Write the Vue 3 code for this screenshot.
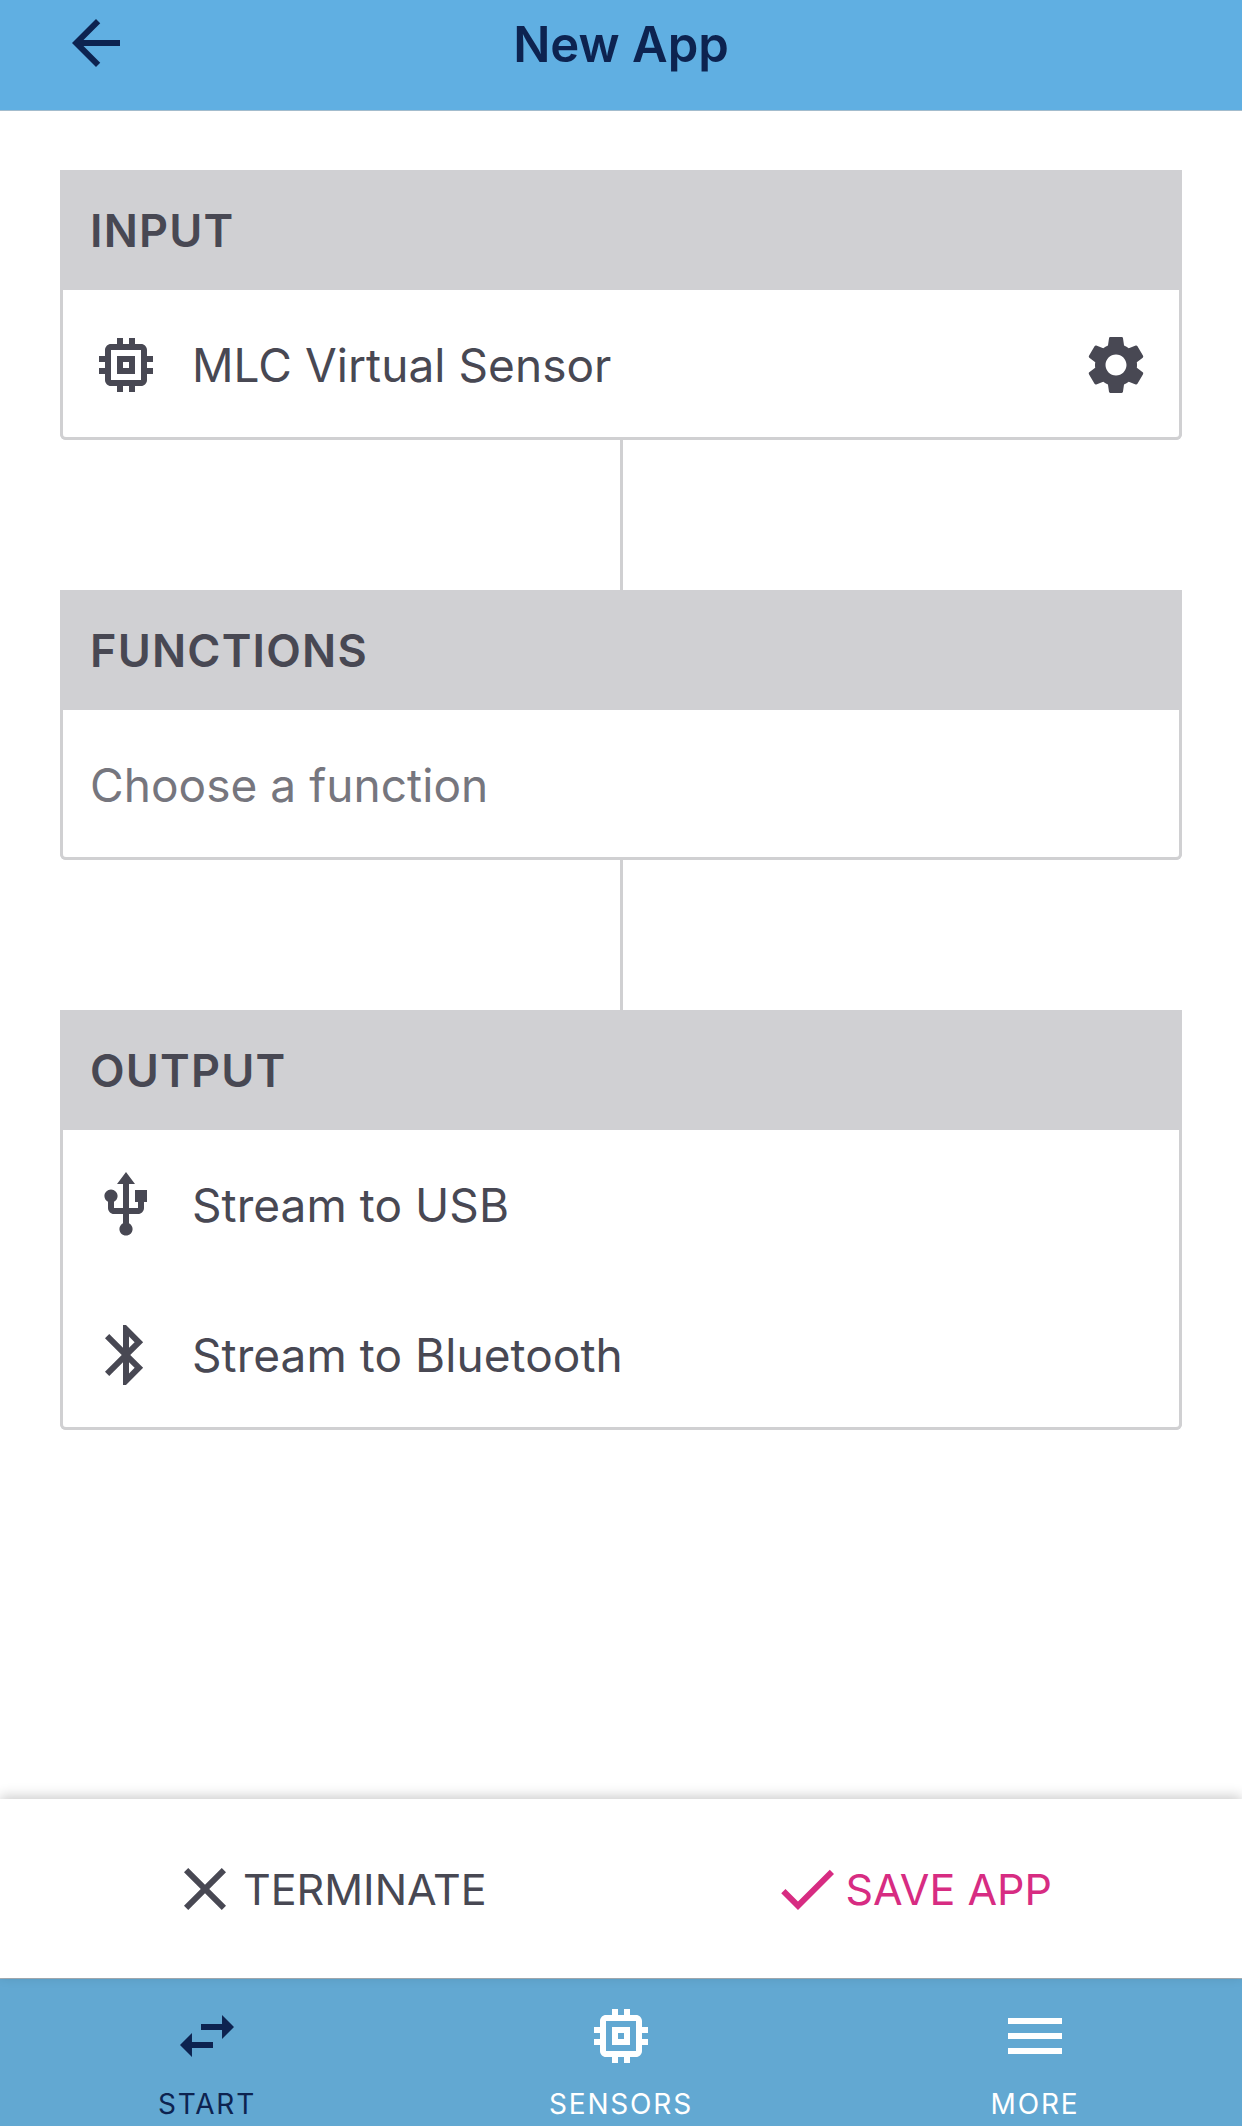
<script setup>
const icons = {
  back: 'M20 11H7.83l5.59-5.59L12 4l-8 8 8 8 1.41-1.41L7.83 13H20v-2z',
  chip: 'M15 9H9v6h6V9zm-2 4h-2v-2h2v2zm8-2V9h-2V7c0-1.1-.9-2-2-2h-2V3h-2v2h-2V3H9v2H7c-1.1 0-2 .9-2 2v2H3v2h2v2H3v2h2v2c0 1.1.9 2 2 2h2v2h2v-2h2v2h2v-2h2c1.1 0 2-.9 2-2v-2h2v-2h-2v-2h2zm-4 6H7V7h10v10z',
  gear: 'M19.14 12.94c.04-.3.06-.61.06-.94 0-.32-.02-.64-.07-.94l2.03-1.58c.18-.14.23-.41.12-.61l-1.92-3.32c-.12-.22-.37-.29-.59-.22l-2.39.96c-.5-.38-1.03-.7-1.62-.94l-.36-2.54c-.04-.24-.24-.41-.48-.41h-3.84c-.24 0-.43.17-.47.41l-.36 2.54c-.59.24-1.13.57-1.62.94l-2.39-.96c-.22-.08-.47 0-.59.22L2.74 8.87c-.12.21-.08.47.12.61l2.03 1.58c-.05.3-.09.63-.09.94s.02.64.07.94l-2.03 1.58c-.18.14-.23.41-.12.61l1.92 3.32c.12.22.37.29.59.22l2.39-.96c.5.38 1.03.7 1.62.94l.36 2.54c.05.24.24.41.48.41h3.84c.24 0 .44-.17.47-.41l.36-2.54c.59-.24 1.13-.56 1.62-.94l2.39.96c.22.08.47 0 .59-.22l1.92-3.32c.12-.22.07-.47-.12-.61l-2.01-1.58zM12 15.6c-1.98 0-3.6-1.62-3.6-3.6s1.62-3.6 3.6-3.6 3.6 1.62 3.6 3.6-1.62 3.6-3.6 3.6z',
  usb: 'M15 7v4h1v2h-3V5h2l-3-4-3 4h2v8H8v-2.07c.7-.37 1.2-1.08 1.2-1.93 0-1.21-.99-2.2-2.2-2.2-1.21 0-2.2.99-2.2 2.2 0 .85.5 1.56 1.2 1.93V13c0 1.11.89 2 2 2h3v3.05c-.71.37-1.2 1.1-1.2 1.95 0 1.22.99 2.2 2.2 2.2 1.21 0 2.2-.98 2.2-2.2 0-.85-.49-1.58-1.2-1.95V15h3c1.11 0 2-.89 2-2v-2h1V7h-4z',
  bluetooth: 'M17.71 7.71L12 2h-1v7.59L6.41 5 5 6.41 10.59 12 5 17.59 6.41 19 11 14.41V22h1l5.71-5.71-4.3-4.29 4.3-4.29zM13 5.83l1.88 1.88L13 9.59V5.83zm1.88 10.46L13 18.17v-3.76l1.88 1.88z',
  close: 'M19 6.41L17.59 5 12 10.59 6.41 5 5 6.41 10.59 12 5 17.59 6.41 19 12 13.41 17.59 19 19 17.59 13.41 12z',
  check: 'M9 16.17L4.83 12l-1.42 1.41L9 19 21 7l-1.41-1.41z',
  swap: 'M6.99 11L3 15l3.99 4v-3H14v-2H6.99v-3zM21 9l-3.99-4v3H10v2h7.01v3L21 9z',
  menu: 'M3 18h18v-2H3v2zm0-5h18v-2H3v2zm0-7v2h18V6H3z'
}

const cards = [
  { title: 'INPUT', rows: [{ icon: 'chip', text: 'MLC Virtual Sensor', settings: true }] },
  { title: 'FUNCTIONS', rows: [{ text: 'Choose a function', placeholder: true }] },
  { title: 'OUTPUT', rows: [{ icon: 'usb', text: 'Stream to USB' }, { icon: 'bluetooth', text: 'Stream to Bluetooth' }] }
]

const tabs = [
  { icon: 'swap', label: 'START', active: true },
  { icon: 'chip', label: 'SENSORS' },
  { icon: 'menu', label: 'MORE' }
]
</script>

<template>
  <div class="screen">
    <header class="topbar">
      <svg class="icon" viewBox="0 0 24 24"><path :d="icons.back" /></svg>
      <h1 class="title">New App</h1>
    </header>

    <main class="content">
      <template v-for="(card, i) in cards" :key="card.title">
        <div v-if="i > 0" class="connector"></div>
        <section class="card">
          <h2 class="card-head">{{ card.title }}</h2>
          <div class="card-body">
            <div v-for="row in card.rows" :key="row.text" class="row">
              <svg v-if="row.icon" class="icon" viewBox="0 0 24 24"><path :d="icons[row.icon]" /></svg>
              <span class="row-text" :class="{ placeholder: row.placeholder, 'with-icon': row.icon }">{{ row.text }}</span>
              <svg v-if="row.settings" class="gear" viewBox="0 0 24 24"><path :d="icons.gear" /></svg>
            </div>
          </div>
        </section>
      </template>
    </main>

    <div class="actions">
      <button class="action">
        <svg class="icon" viewBox="0 0 24 24"><path :d="icons.close" /></svg>
        <span>TERMINATE</span>
      </button>
      <button class="action save">
        <svg class="icon" viewBox="0 0 24 24"><path :d="icons.check" /></svg>
        <span>SAVE APP</span>
      </button>
    </div>

    <nav class="tabs">
      <div v-for="tab in tabs" :key="tab.label" class="tab" :class="{ active: tab.active }">
        <svg class="icon" viewBox="0 0 24 24"><path :d="icons[tab.icon]" /></svg>
        <span class="tab-label">{{ tab.label }}</span>
      </div>
    </nav>
  </div>
</template>

<style scoped>
.screen {
  width: 1242px;
  height: 2126px;
  display: flex;
  flex-direction: column;
  overflow: hidden;
  background: #fff;
  color: #484853;
  font-family: Inter, "Noto Sans", sans-serif;
}
.icon {
  width: 72px;
  height: 72px;
  flex: none;
  fill: currentColor;
  display: block;
}
.topbar {
  box-sizing: border-box;
  height: 111px;
  padding: 0 60px 24px;
  display: grid;
  grid-template-columns: 1fr auto 1fr;
  align-items: center;
  background: #60afe2;
  border-bottom: 1px solid #a3bccd;
  color: #0d2350;
}
.title {
  margin: 3px 0 0;
  font-size: 49px;
  line-height: 56px;
  font-weight: 600;
}
.content {
  flex: 1;
  padding: 59px 60px 0;
}
.connector {
  width: 3px;
  height: 150px;
  margin: 0 auto;
  background: #d0d0d2;
}
.card-head {
  margin: 0;
  height: 120px;
  padding: 0 30px;
  display: flex;
  align-items: center;
  background: #d0d0d3;
  font-size: 45px;
  font-weight: 600;
  letter-spacing: 1.2px;
}
.card-body {
  padding: 0 30px;
  border-radius: 0 0 6px 6px;
  box-shadow: inset 3px 0 0 #d0d0d2, inset -3px 0 0 #d0d0d2, inset 0 -3px 0 #d0d0d2;
}
.row {
  height: 150px;
  display: flex;
  align-items: center;
}
.row-text {
  font-size: 46px;
  line-height: 54px;
  font-weight: 400;
  letter-spacing: 0.05px;
}
.row-text.with-icon {
  margin-left: 30px;
}
.placeholder {
  color: #76767e;
}
.gear {
  width: 70px;
  height: 70px;
  margin-left: auto;
  margin-right: 1px;
  fill: currentColor;
}
.actions {
  box-sizing: border-box;
  height: 179px;
  padding: 0 190px 0 169px;
  display: flex;
  align-items: center;
  justify-content: space-between;
  background: #fff;
  box-shadow: 0 -3px 12px rgba(0, 0, 0, 0.2);
  position: relative;
}
.action {
  display: flex;
  align-items: center;
  gap: 2px;
  padding: 0;
  border: none;
  background: none;
  color: #484853;
  font: 400 43px Inter, "Noto Sans", sans-serif;
}
.save {
  color: #d72c82;
}
.tabs {
  box-sizing: border-box;
  height: 148px;
  padding-top: 21px;
  display: grid;
  grid-template-columns: repeat(3, 1fr);
  background: #62a8d2;
  border-top: 1px solid #a8b0b6;
  color: #fff;
}
.tab {
  display: flex;
  flex-direction: column;
  align-items: center;
}
.tab.active {
  color: #0d2350;
}
.tab-label {
  margin-top: 15px;
  font-size: 28px;
  line-height: 34px;
  letter-spacing: 1.8px;
}
</style>
